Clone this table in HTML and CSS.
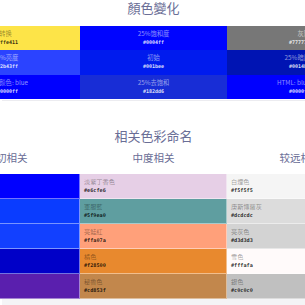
FILE: index.html
```html
<!DOCTYPE html>
<html lang="zh">
<head>
<meta charset="utf-8">
<link rel="stylesheet" href="styles.css">
</head>
<body>
<div class="page">
  <h2 class="title">顏色變化</h2>
  <div class="variations">
    <div class="vcell left light" style="background:#fde448"><span class="lbl">色转换</span><span class="hex">#ffe411</span></div>
    <div class="vcell mid" style="background:#0004ff"><span class="lbl">25%饱和度</span><span class="hex">#0004ff</span></div>
    <div class="vcell right" style="background:#777777"><span class="lbl">灰階</span><span class="hex">#777777</span></div>
    <div class="vcell left" style="background:#2b43ff"><span class="lbl">25%亮度</span><span class="hex">#2b43ff</span></div>
    <div class="vcell mid" style="background:#001bee"><span class="lbl">初始</span><span class="hex">#001bee</span></div>
    <div class="vcell right" style="background:#0014b3"><span class="lbl">25%暗度</span><span class="hex">#0014b3</span></div>
    <div class="vcell left" style="background:#0000ff"><span class="lbl">原颜色: blue</span><span class="hex">#0000ff</span></div>
    <div class="vcell mid" style="background:#182dd6"><span class="lbl">25%去饱和</span><span class="hex">#182dd6</span></div>
    <div class="vcell right" style="background:#0000ff"><span class="lbl">HTML: blue</span><span class="hex">#0000ff</span></div>
  </div>
  <div class="sep"></div>
  <h2 class="title t2">相关色彩命名</h2>
  <div class="related">
    <div class="head">密切相关</div>
    <div class="head">中度相关</div>
    <div class="head">较远相关</div>
    <div class="rcell dark" style="background:#0000ff"><span class="lbl">藍色</span><span class="hex">#0000ff</span></div>
    <div class="rcell" style="background:#e6cfe6"><span class="lbl">淡紫丁香色</span><span class="hex">#e6cfe6</span></div>
    <div class="rcell" style="background:#f5f5f5"><span class="lbl">白煙色</span><span class="hex">#f5f5f5</span></div>
    <div class="rcell dark" style="background:#0a3cff"><span class="lbl">藍寶石色</span><span class="hex">#0a3cff</span></div>
    <div class="rcell" style="background:#5f9ea0"><span class="lbl">軍服藍</span><span class="hex">#5f9ea0</span></div>
    <div class="rcell" style="background:#dcdcdc"><span class="lbl">庚斯博羅灰</span><span class="hex">#dcdcdc</span></div>
    <div class="rcell dark" style="background:#1240ff"><span class="lbl">寶藍色</span><span class="hex">#1240ff</span></div>
    <div class="rcell" style="background:#ffa07a"><span class="lbl">亮鮭紅</span><span class="hex">#ffa07a</span></div>
    <div class="rcell" style="background:#d3d3d3"><span class="lbl">亮灰色</span><span class="hex">#d3d3d3</span></div>
    <div class="rcell dark" style="background:#0000c8"><span class="lbl">中藍色</span><span class="hex">#0000cd</span></div>
    <div class="rcell" style="background:#e8892e"><span class="lbl">橘色</span><span class="hex">#f28500</span></div>
    <div class="rcell" style="background:#fffafa"><span class="lbl">雪色</span><span class="hex">#fffafa</span></div>
    <div class="rcell dark" style="background:#5a1fae"><span class="lbl">藍紫色</span><span class="hex">#5a1fae</span></div>
    <div class="rcell" style="background:#c2874c"><span class="lbl">秘魯色</span><span class="hex">#cd853f</span></div>
    <div class="rcell" style="background:#c0c0c0"><span class="lbl">銀色</span><span class="hex">#c0c0c0</span></div>
  </div>
  <div class="foot"></div>
</div>
</body>
</html>
```

FILE: styles.css
```css
html, body {
  margin: 0;
  padding: 0;
  background: #ffffff;
  overflow: hidden;
}
.page {
  width: 305px;
  box-sizing: border-box;
  padding-left: 2px;
  display: flex;
  flex-direction: column;
  align-items: center;
  font-family: "Noto Sans CJK SC", "Noto Sans", sans-serif;
}
.title {
  margin: 0 0 10px 0;
  font-size: 13px;
  line-height: 16px;
  font-weight: 400;
  color: #6a6e96;
  white-space: nowrap;
}
.t2 {
  margin-top: 27px;
  margin-bottom: 7px;
}
.variations {
  display: grid;
  grid-template-columns: 87px 147px 87px;
  grid-auto-rows: 24.33px;
  width: 321px;
}
.vcell {
  display: flex;
  flex-direction: column;
  padding: 3px 4px 0 4px;
  box-sizing: border-box;
  overflow: hidden;
  white-space: nowrap;
}
.vcell .lbl {
  font-size: 6.3px;
  line-height: 10px;
  color: rgba(255, 255, 255, 0.55);
}
.vcell.left .lbl {
  margin-left: -4px;
}
.vcell .hex {
  font-family: "DejaVu Sans Mono", monospace;
  font-weight: 700;
  font-size: 5px;
  line-height: 7px;
  color: rgba(255, 255, 255, 0.85);
}
.vcell.light .lbl { color: rgba(0, 0, 0, 0.4); }
.vcell.light .hex { color: rgba(0, 0, 0, 0.8); }
.left { align-items: flex-start; }
.mid { align-items: center; }
.right { align-items: flex-end; }
.sep {
  width: 100%;
  height: 1px;
  margin-top: 1px;
  background: #ececf0;
}
.related {
  display: grid;
  grid-template-columns: 147px 147px 147px;
  width: 441px;
}
.head {
  text-align: center;
  font-size: 10.5px;
  line-height: 14px;
  color: #6a6e96;
  padding-bottom: 9px;
}
.rcell {
  height: 25px;
  box-sizing: border-box;
  padding: 3px 4px 0 4px;
  display: flex;
  flex-direction: column;
  border-bottom: 1px solid rgba(255, 255, 255, 0.45);
  border-right: 1px solid rgba(255, 255, 255, 0.45);
  white-space: nowrap;
  overflow: hidden;
}
.rcell .lbl {
  font-size: 6.2px;
  line-height: 9px;
  color: rgba(0, 0, 0, 0.38);
}
.rcell .hex {
  font-family: "DejaVu Sans Mono", monospace;
  font-weight: 700;
  font-size: 5.2px;
  line-height: 8px;
  color: rgba(0, 0, 0, 0.82);
}
.rcell.dark .lbl { color: rgba(255, 255, 255, 0.55); }
.rcell.dark .hex { color: rgba(255, 255, 255, 0.85); }
.foot {
  width: 100%;
  height: 40px;
  background: #f4f4f6;
}
```
